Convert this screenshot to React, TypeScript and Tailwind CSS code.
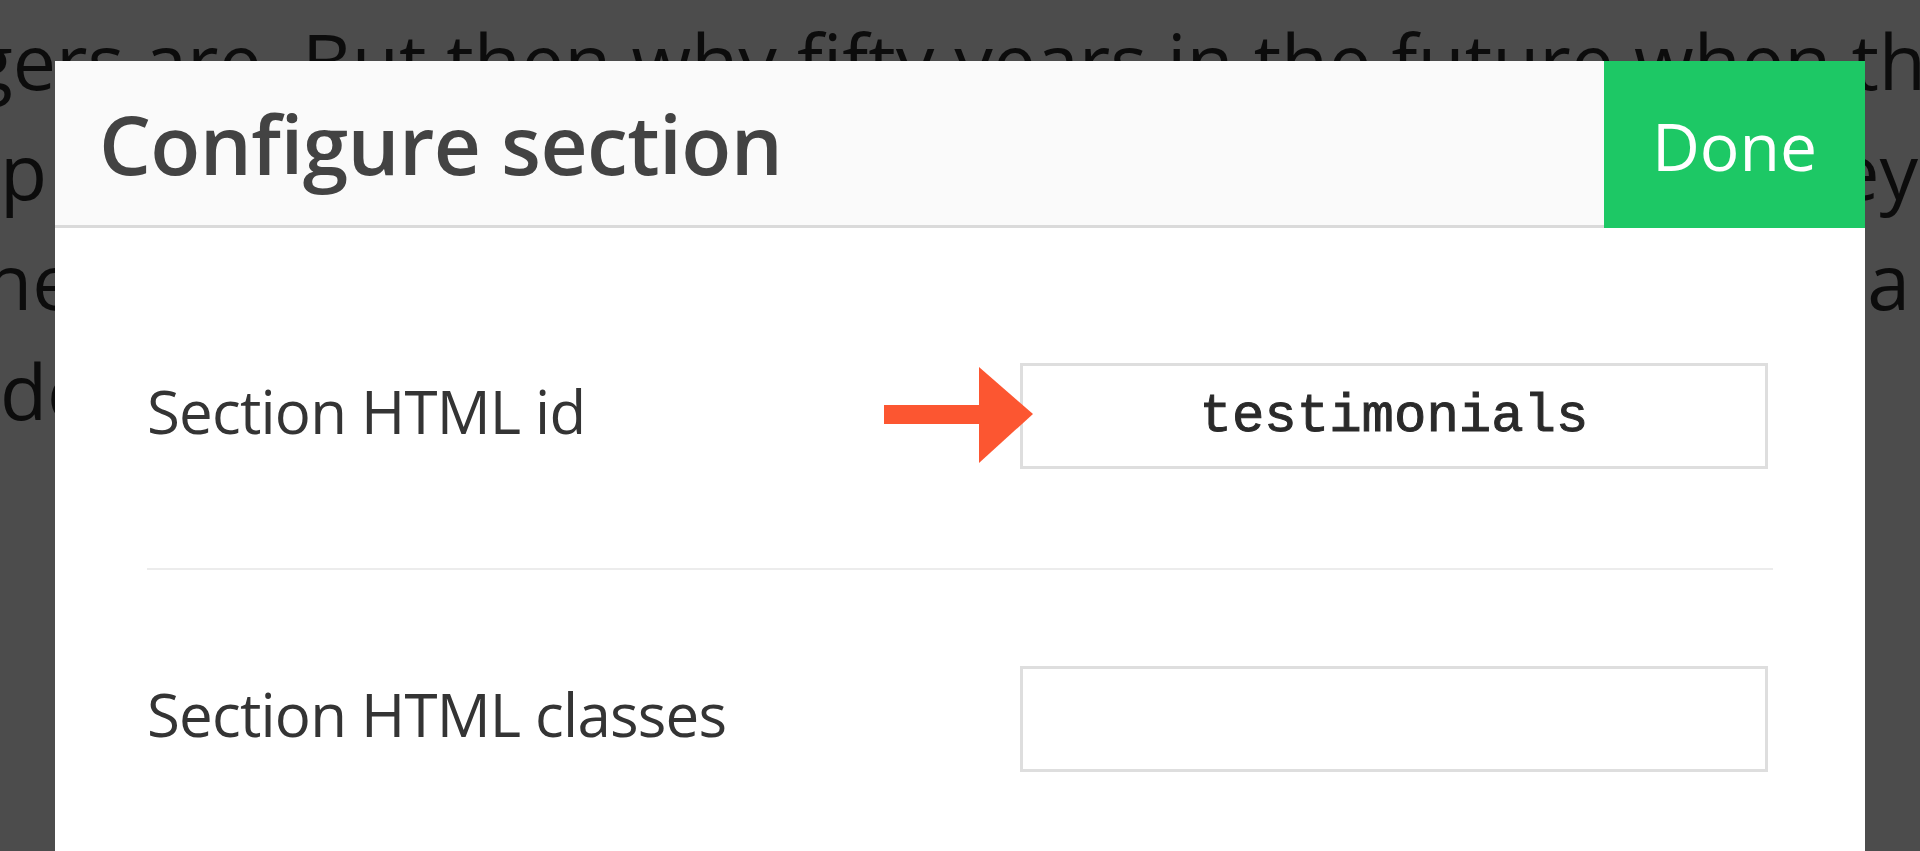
import React from 'react';

const sans = { fontFamily: '"Open Sans", "Liberation Sans", sans-serif' };

const Arrow: React.FC = () => (
  <svg width="149" height="96" viewBox="0 0 149 96" className="absolute left-[737px] top-[4px]">
    <rect x="0" y="38" width="97" height="19" fill="#fc5631" />
    <polygon points="95,0 149,47 95,96" fill="#fc5631" />
  </svg>
);

const Field: React.FC<{ label: string; value?: string; arrow?: boolean }> = ({ label, value = '', arrow }) => (
  <div className="relative flex items-start justify-between">
    <span className="mt-[3px] text-[60px] leading-normal tracking-[-0.8px] text-[#343434]">{label}</span>
    {arrow && <Arrow />}
    <input
      readOnly
      value={value}
      className="mr-[5px] h-[106px] w-[748px] border-[3px] border-[#dedede] bg-white text-center text-[54px] text-[#2a2a2a] outline-none [-webkit-text-stroke:1px_#2a2a2a]"
      style={{ fontFamily: '"Liberation Mono", "Courier New", monospace' }}
    />
  </div>
);

export default function App() {
  return (
    <div className="relative h-[851px] w-full overflow-hidden bg-[#4c4c4c]" style={sans}>
      {/* page text behind the overlay */}
      <div className="pt-[6px] text-[77px] leading-[110px] text-[#0c0c0c]">
        <div className="ml-[-29px] whitespace-nowrap">gers are. But then why fifty years in the future when they</div>
        <div className="flex justify-between whitespace-nowrap pr-[2px]">
          <span>p</span>
          <span>they</span>
        </div>
        <div className="ml-[-15px] flex justify-between whitespace-nowrap pr-[10px]">
          <span>here</span>
          <span>a</span>
        </div>
        <div className="whitespace-nowrap">do</div>
      </div>

      {/* modal */}
      <div className="absolute bottom-0 left-[55px] right-[55px] top-[61px] flex flex-col bg-white">
        <div className="flex h-[167px]">
          <div className="flex flex-1 items-center border-b-[3px] border-[#dadada] bg-[#fafafa] pl-[44px]">
            <h1 className="text-[82px] font-semibold leading-none tracking-[-0.6px] text-[#434343]">Configure section</h1>
          </div>
          <button className="flex w-[261px] items-center justify-center bg-[#1dc865] text-[66px] leading-none text-white">
            Done
          </button>
        </div>

        <div className="px-[92px] pt-[135px]">
          <Field label="Section HTML id" value="testimonials" arrow />
          <div className="mb-[96px] mt-[99px] h-[2px] bg-[#ececec]" />
          <Field label="Section HTML classes" />
        </div>
      </div>
    </div>
  );
}
